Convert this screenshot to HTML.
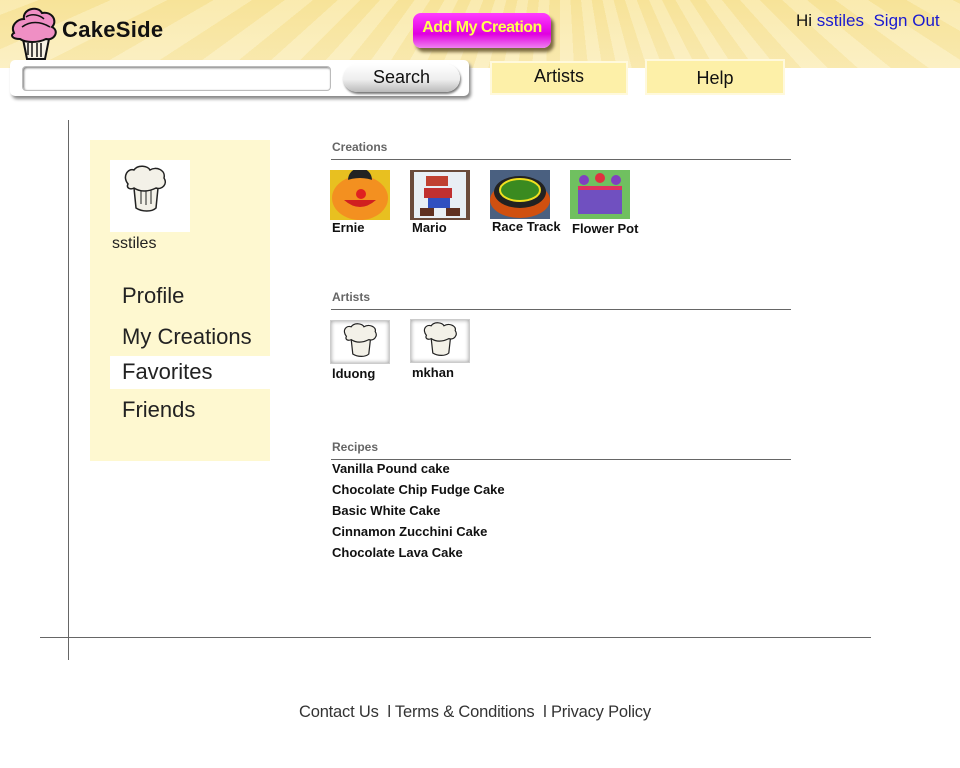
<!DOCTYPE html>
<html><head><meta charset="utf-8">
<style>
*{margin:0;padding:0;box-sizing:border-box}
body{width:960px;height:768px;position:relative;background:#fff;font-family:"Liberation Sans",sans-serif;overflow:hidden;color:#222}
.a{position:absolute}
#hdr{left:0;top:0;width:960px;height:68px;
background:
repeating-conic-gradient(from 90deg at 560px -200px,#f6e29a 0deg 3deg,#fbf0c4 3deg 6deg);
}
#hdr2{left:0;top:0;width:960px;height:68px;background:linear-gradient(180deg,rgba(248,228,150,.45),rgba(252,240,196,.5))}
.lbl{font-size:13px;font-weight:bold;color:#111}
.sec{font-size:12px;font-weight:bold;color:#666}
.hr{height:1px;background:#666}
.nav{font-size:22px;color:#222;left:122px}
.tab{background:#fdf0a8;border:2px solid #fff9dc;font-size:18px;text-align:center;color:#111}
</style></head><body>
<div id="hdr" class="a"></div><div id="hdr2" class="a"></div>

<!-- logo -->
<svg class="a" style="left:8px;top:3px" width="52" height="58" viewBox="0 0 52 58">
<path d="M15 36 L19 56 H37 L41 36 Z" fill="#f6f1e4" stroke="#111" stroke-width="2"/>
<path d="M24 40 V54 M29 40 V54 M33 40 V54 M20 40 V52" stroke="#111" stroke-width="1.5"/>
<path d="M6 30 C2 22 10 16 16 16 C14 6 30 2 34 10 C44 8 50 18 44 24 C52 28 46 38 38 36 C30 40 18 40 12 36 C4 36 2 32 6 30Z" fill="#ef8fc4" stroke="#111" stroke-width="2"/>
<path d="M14 24 C22 18 32 18 42 24 M18 14 C24 10 32 12 36 16" stroke="#111" stroke-width="1.5" fill="none"/>
</svg>
<div class="a" style="left:62px;top:17px;font-size:22px;font-weight:bold;color:#111;letter-spacing:0.3px">CakeSide</div>

<!-- add my creation -->
<div class="a" style="left:413px;top:13px;width:138px;height:35px;border-radius:8px;background:linear-gradient(#ff3cff,#e000e0 60%,#f080f0);box-shadow:3px 4px 3px #7a6a40;color:#ffff50;font-size:16px;text-align:center;line-height:30px;font-weight:bold;letter-spacing:-0.5px">Add My Creation</div>

<div class="a" style="left:796px;top:11px;font-size:17px;color:#111">Hi <span style="color:#1a1ad0">sstiles</span>&nbsp;&nbsp;<span style="color:#1a1ad0">Sign Out</span></div>

<!-- search -->
<div class="a" style="left:10px;top:60px;width:459px;height:36px;background:#fff;border-radius:5px;box-shadow:2px 3px 3px #888"></div>
<div class="a" style="left:22px;top:66px;width:309px;height:25px;border:1px solid #bbb;border-radius:4px;box-shadow:inset 1px 1px 2px #777;background:#fff"></div>
<div class="a" style="left:343px;top:64px;width:117px;height:28px;border-radius:14px;background:linear-gradient(#fff,#eee 55%,#bbb);box-shadow:1px 2px 2px #777;font-size:18px;text-align:center;line-height:26px;color:#111">Search</div>

<div class="a tab" style="left:490px;top:61px;width:138px;height:34px;line-height:26px">Artists</div>
<div class="a tab" style="left:645px;top:59px;width:140px;height:36px;line-height:34px">Help</div>

<!-- frame lines -->
<div class="a" style="left:68px;top:120px;width:1px;height:540px;background:#666"></div>
<div class="a" style="left:40px;top:637px;width:831px;height:1px;background:#666"></div>

<!-- sidebar -->
<div class="a" style="left:90px;top:140px;width:180px;height:321px;background:#fef8d0"></div>
<div class="a" style="left:110px;top:160px;width:80px;height:72px;background:#fff"></div>
<svg class="a" style="left:120px;top:164px" width="50" height="50" viewBox="0 0 50 50">
<path d="M14 24 L16 44 C22 48 32 48 36 44 L38 24 Z" fill="#f3f1e8" stroke="#222" stroke-width="1.5"/>
<path d="M21 25 V40 M26 25 V41 M31 25 V40" stroke="#222"/>
<path d="M8 20 C2 12 8 4 14 6 C18 0 28 2 30 6 C36 2 46 6 44 14 C48 20 42 26 36 24 C28 28 20 28 14 24 C10 26 6 24 8 20Z" fill="#f3f1e8" stroke="#222" stroke-width="1.5"/>
</svg>
<div class="a" style="left:112px;top:235px;font-size:16px;color:#222">sstiles</div>
<div class="a nav" style="top:283px">Profile</div>
<div class="a nav" style="top:324px">My Creations</div>
<div class="a" style="left:110px;top:356px;width:160px;height:33px;background:#fff"></div>
<div class="a nav" style="top:359px">Favorites</div>
<div class="a nav" style="top:397px">Friends</div>

<!-- creations -->
<div class="a sec" style="left:332px;top:140px">Creations</div>
<div class="a hr" style="left:331px;top:159px;width:460px"></div>
<svg class="a" style="left:330px;top:170px" width="60" height="50"><rect width="60" height="50" fill="#e8c020"/><ellipse cx="30" cy="28" rx="28" ry="22" fill="#f39020"/><circle cx="30" cy="10" r="12" fill="#222"/><ellipse cx="30" cy="18" rx="20" ry="10" fill="#f39020"/><circle cx="31" cy="24" r="5" fill="#e02020"/><path d="M14 30 Q30 44 46 30" fill="#d02020"/></svg>
<svg class="a" style="left:410px;top:170px" width="60" height="50"><rect width="60" height="50" fill="#6a4a3a"/><rect x="4" y="2" width="52" height="46" fill="#e8eef4"/><rect x="16" y="6" width="22" height="10" fill="#c04030"/><rect x="14" y="18" width="28" height="10" fill="#c03030"/><rect x="18" y="28" width="22" height="10" fill="#3050c0"/><rect x="10" y="38" width="14" height="8" fill="#603020"/><rect x="36" y="38" width="14" height="8" fill="#603020"/></svg>
<svg class="a" style="left:490px;top:170px" width="60" height="49"><rect width="60" height="49" fill="#4a6080"/><ellipse cx="30" cy="30" rx="30" ry="18" fill="#d05010"/><ellipse cx="30" cy="22" rx="26" ry="16" fill="#222"/><ellipse cx="30" cy="20" rx="20" ry="11" fill="#3a8a20" stroke="#f0e020" stroke-width="2"/></svg>
<svg class="a" style="left:570px;top:170px" width="60" height="49"><rect width="60" height="49" fill="#70c060"/><rect x="8" y="16" width="44" height="28" fill="#7050c0"/><circle cx="14" cy="10" r="5" fill="#8040c0"/><circle cx="30" cy="8" r="5" fill="#e03040"/><circle cx="46" cy="10" r="5" fill="#8040c0"/><rect x="8" y="16" width="44" height="4" fill="#e03060"/></svg>
<div class="a lbl" style="left:332px;top:220px">Ernie</div>
<div class="a lbl" style="left:412px;top:220px">Mario</div>
<div class="a lbl" style="left:492px;top:219px">Race Track</div>
<div class="a lbl" style="left:572px;top:221px">Flower Pot</div>

<!-- artists -->
<div class="a sec" style="left:332px;top:290px">Artists</div>
<div class="a hr" style="left:331px;top:309px;width:460px"></div>
<div class="a" style="left:330px;top:320px;width:60px;height:44px;border:1px solid #ccc;box-shadow:inset 0 0 4px #999;background:#fff"></div>
<div class="a" style="left:410px;top:319px;width:60px;height:44px;border:1px solid #ccc;box-shadow:inset 0 0 4px #999;background:#fff"></div>
<svg class="a" style="left:340px;top:322px" width="40" height="36" viewBox="0 0 50 45"><path d="M14 22 L16 40 C22 44 32 44 36 40 L38 22 Z" fill="#f3f1e8" stroke="#222" stroke-width="1.5"/><path d="M8 18 C2 10 8 4 14 6 C18 0 28 2 30 6 C36 2 46 6 44 12 C48 18 42 24 36 22 C28 26 20 26 14 22 C10 24 6 22 8 18Z" fill="#f3f1e8" stroke="#222" stroke-width="1.5"/></svg>
<svg class="a" style="left:420px;top:321px" width="40" height="36" viewBox="0 0 50 45"><path d="M14 22 L16 40 C22 44 32 44 36 40 L38 22 Z" fill="#f3f1e8" stroke="#222" stroke-width="1.5"/><path d="M8 18 C2 10 8 4 14 6 C18 0 28 2 30 6 C36 2 46 6 44 12 C48 18 42 24 36 22 C28 26 20 26 14 22 C10 24 6 22 8 18Z" fill="#f3f1e8" stroke="#222" stroke-width="1.5"/></svg>
<div class="a lbl" style="left:332px;top:366px">lduong</div>
<div class="a lbl" style="left:412px;top:365px">mkhan</div>

<!-- recipes -->
<div class="a sec" style="left:332px;top:440px">Recipes</div>
<div class="a hr" style="left:331px;top:459px;width:460px"></div>
<div class="a lbl" style="left:332px;top:458px;line-height:21px">Vanilla Pound cake<br>Chocolate Chip Fudge Cake<br>Basic White Cake<br>Cinnamon Zucchini Cake<br>Chocolate Lava Cake</div>

<!-- footer -->
<div class="a" style="left:299px;top:703px;font-size:16.5px;color:#333;white-space:nowrap;letter-spacing:-0.2px">Contact Us&nbsp; l Terms &amp; Conditions&nbsp; l Privacy Policy</div>
</body></html>
